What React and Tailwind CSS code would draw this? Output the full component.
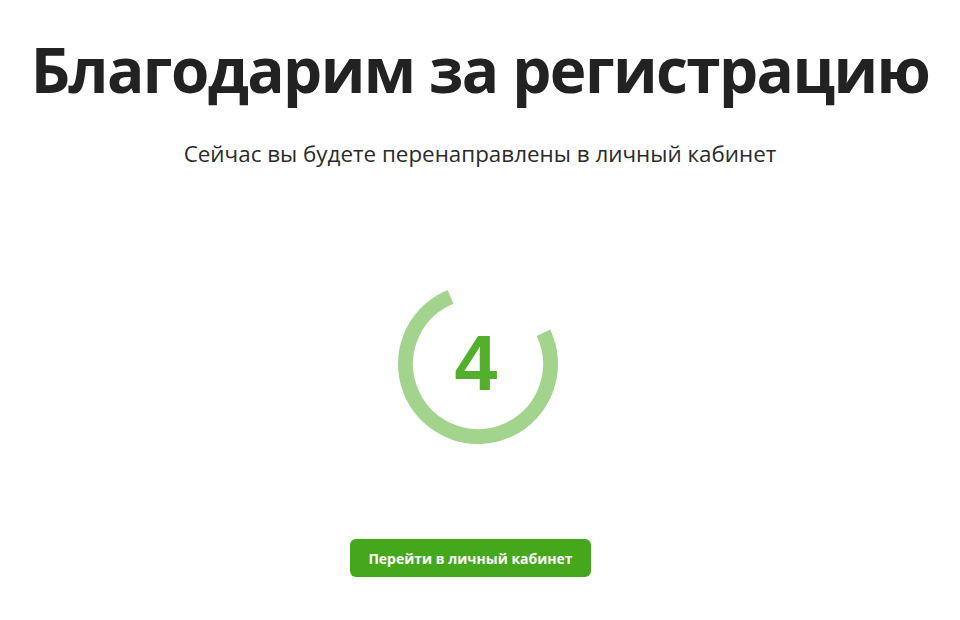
import React from "react";

export default function App() {
  const r = 72.5;
  const c = 2 * Math.PI * r;
  const frac = 0.758;
  return (
    <div className="w-[960px] h-[620px] bg-white flex flex-col items-center" style={{ fontFamily: '"Open Sans", "Noto Sans", sans-serif' }}>
      <h1 className="mt-[26px] text-[62px] leading-[86px] font-bold text-[#222222] tracking-[-1.6px]">Благодарим за регистрацию</h1>
      <p className="mt-[27px] text-[22.4px] leading-[30px] text-[#2b2b2b]">Сейчас вы будете перенаправлены в личный кабинет</p>
      <div className="mt-[115px] mr-[4px] relative w-[160px] h-[160px] flex items-center justify-center">
        <svg width="160" height="160" viewBox="0 0 160 160" className="absolute inset-0">
          <circle
            cx="80"
            cy="80"
            r={r}
            fill="none"
            stroke="#a3d48d"
            strokeWidth="15"
            strokeDasharray={`${c * frac} ${c}`}
            transform="rotate(-25.5 80 80)"
          />
        </svg>
        <span className="relative -ml-[4px] text-[77px] font-bold text-[#52ae2b]" style={{ fontFamily: '"Liberation Sans", Arial, sans-serif' }}>4</span>
      </div>
      <button className="mt-[95px] mr-[19px] w-[241px] h-[38px] rounded-[6px] bg-[#45a71c] text-white text-[14px] font-bold">Перейти в личный кабинет</button>
    </div>
  );
}
